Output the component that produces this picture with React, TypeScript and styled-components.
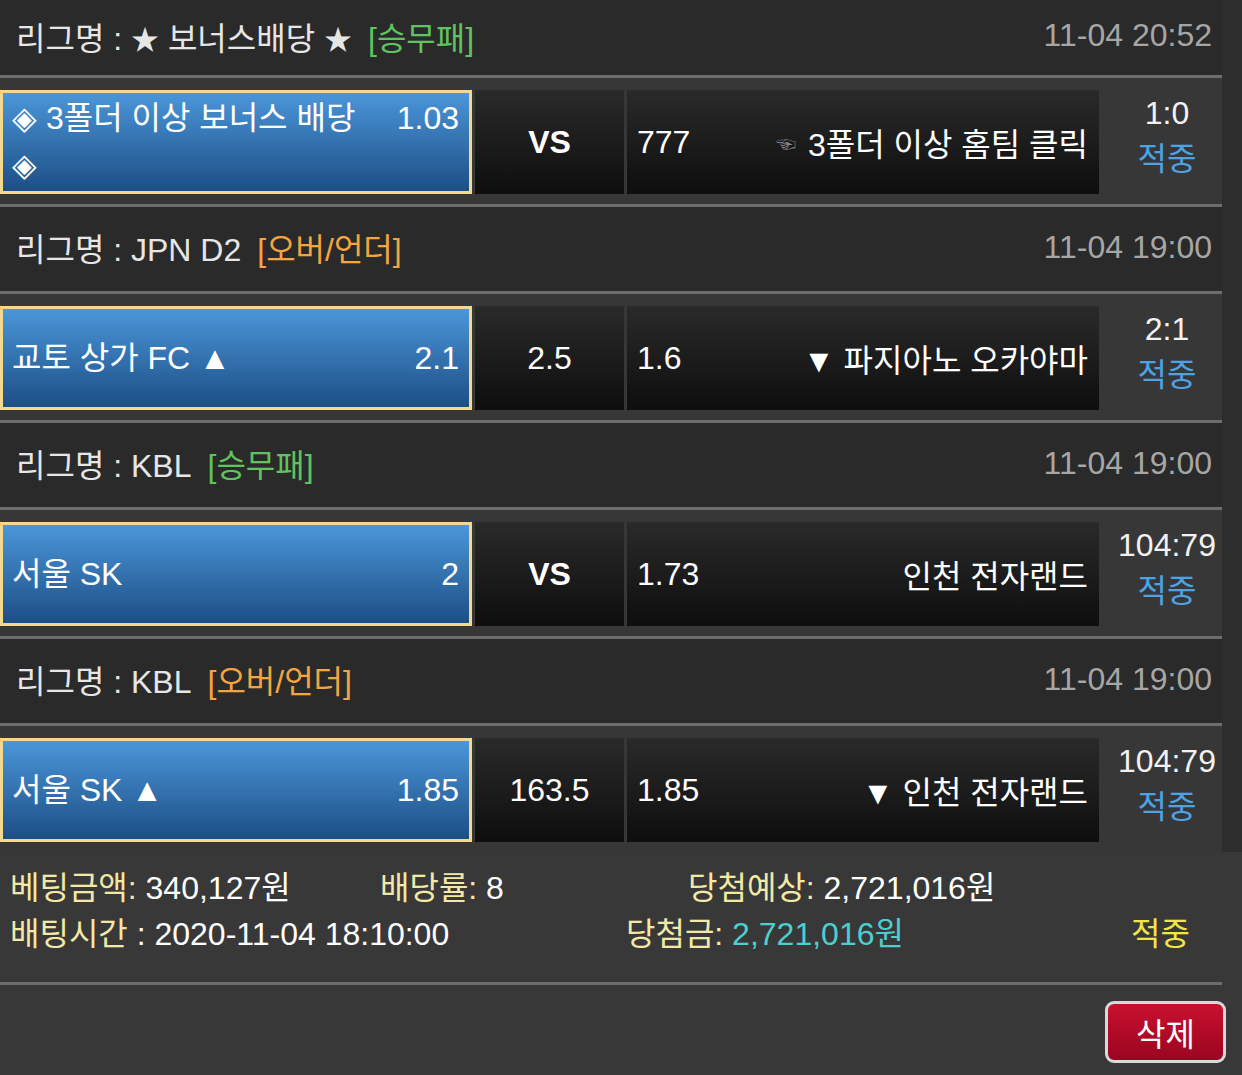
import styled, { createGlobalStyle } from "styled-components";

type TagTone = "green" | "orange";

interface Match {
  league: string;
  tag: string;
  tone: TagTone;
  date: string;
  home: string;
  homeOdds: string;
  middle: string;
  middleBold?: boolean;
  awayOdds: string;
  away: string;
  awayHint?: boolean;
  score: string;
  result: string;
}

const matches: Match[] = [
  {
    league: "★ 보너스배당 ★",
    tag: "[승무패]",
    tone: "green",
    date: "11-04 20:52",
    home: "◈ 3폴더 이상 보너스 배당 ◈",
    homeOdds: "1.03",
    middle: "VS",
    middleBold: true,
    awayOdds: "777",
    away: "3폴더 이상 홈팀 클릭",
    awayHint: true,
    score: "1:0",
    result: "적중",
  },
  {
    league: "JPN D2",
    tag: "[오버/언더]",
    tone: "orange",
    date: "11-04 19:00",
    home: "교토 상가 FC ▲",
    homeOdds: "2.1",
    middle: "2.5",
    awayOdds: "1.6",
    away: "▼ 파지아노 오카야마",
    score: "2:1",
    result: "적중",
  },
  {
    league: "KBL",
    tag: "[승무패]",
    tone: "green",
    date: "11-04 19:00",
    home: "서울 SK",
    homeOdds: "2",
    middle: "VS",
    middleBold: true,
    awayOdds: "1.73",
    away: "인천 전자랜드",
    score: "104:79",
    result: "적중",
  },
  {
    league: "KBL",
    tag: "[오버/언더]",
    tone: "orange",
    date: "11-04 19:00",
    home: "서울 SK ▲",
    homeOdds: "1.85",
    middle: "163.5",
    awayOdds: "1.85",
    away: "▼ 인천 전자랜드",
    score: "104:79",
    result: "적중",
  },
];

const tagColours: Record<TagTone, string> = {
  green: "#5fc35f",
  orange: "#f5a540",
};

const GlobalStyle = createGlobalStyle`
  html, body {
    margin: 0;
    background: #383838;
  }
  body {
    font-family: "Liberation Sans", "Noto Sans CJK KR", sans-serif;
    color: #fff;
  }
`;

const ListArea = styled.div`
  background: #2d2d2d;
`;

const List = styled.div`
  width: 1222px;
`;

const LeagueHeader = styled.div<{ $compact?: boolean }>`
  box-sizing: border-box;
  height: ${({ $compact }) => ($compact ? 75 : 84)}px;
  display: flex;
  align-items: center;
  justify-content: space-between;
  padding: 0 10px 4px 16px;
  background: #2a2a2a;
  font-size: 32px;
  color: #e6e6e6;
  white-space: nowrap;
`;

const Star = styled.span`
  font-size: 28px;
`;

const Tag = styled.span<{ $tone: TagTone }>`
  margin-left: 16px;
  color: ${({ $tone }) => tagColours[$tone]};
`;

const DateText = styled.span`
  color: #a6a6a6;
`;

const Divider = styled.div`
  width: 1222px;
  height: 3px;
  background: #6d6d6d;
`;

const MatchRow = styled.div`
  display: flex;
  gap: 3px;
  height: 104px;
  padding: 12px 0 10px;
  background: #373737;
  font-size: 32px;
`;

const HomeCell = styled.div`
  box-sizing: border-box;
  width: 472px;
  height: 104px;
  display: flex;
  align-items: center;
  padding: 0 10px 0 9px;
  border: 3px solid #f2d98e;
  background: linear-gradient(#4b96d9, #1c4e85);
`;

const HomeText = styled.div`
  width: 100%;
  line-height: 47px;
`;

const HomeOdds = styled.span`
  float: right;
  margin-left: 30px;
`;

const DarkCell = styled.div`
  box-sizing: border-box;
  height: 104px;
  display: flex;
  align-items: center;
  background: linear-gradient(#2a2a2a, #0e0e0e);
`;

const MiddleCell = styled(DarkCell)<{ $bold?: boolean }>`
  width: 149px;
  justify-content: center;
  font-weight: ${({ $bold }) => ($bold ? 700 : 400)};
`;

const AwayCell = styled(DarkCell)`
  width: 472px;
  justify-content: space-between;
  padding: 0 11px 0 10px;
  white-space: nowrap;
`;

const Hint = styled.span`
  font-size: 20px;
  color: #8a8a8a;
  margin-right: 12px;
  vertical-align: 4px;
`;

const ScoreCell = styled.div`
  box-sizing: border-box;
  flex: 1;
  height: 104px;
  display: flex;
  flex-direction: column;
  align-items: center;
  justify-content: center;
  padding: 0 0 12px 10px;
  line-height: 46px;
  color: #f2f2f2;
`;

const Result = styled.span`
  color: #4ea2e2;
`;

const Summary = styled.div`
  padding: 13px 0 25px 10px;
  font-size: 32px;
  line-height: 46px;
  white-space: nowrap;
`;

const SummaryRow = styled.div<{ $cols: string }>`
  display: grid;
  grid-template-columns: ${({ $cols }) => $cols};
`;

const Label = styled.span`
  color: #f3e8a6;
`;

const Value = styled.span<{ $tone?: "cyan" }>`
  color: ${({ $tone }) => ($tone === "cyan" ? "#4dcfcf" : "#fff")};
`;

const HitText = styled.span`
  color: #f2e54a;
`;

const ButtonBar = styled.div`
  display: flex;
  justify-content: flex-end;
  padding: 16px 16px 10px;
`;

const DeleteButton = styled.button`
  box-sizing: border-box;
  width: 121px;
  height: 62px;
  border: 3px solid #d9d9d9;
  border-radius: 9px;
  background: linear-gradient(#c9112f, #9a0520);
  color: #fff;
  font-family: inherit;
  font-size: 32px;
  padding: 0;
`;

// the league title keeps its stars a touch smaller than the text
const LeagueTitle = ({ name }: { name: string }) => (
  <>
    {name
      .split(/(★)/)
      .map((part, i) => (part === "★" ? <Star key={i}>★</Star> : part))}
  </>
);

const App = () => {
  return (
    <>
      <GlobalStyle />
      <ListArea>
        <List>
          {matches.map((m, idx) => (
            <div key={idx}>
              <LeagueHeader $compact={idx === 0}>
                <span>
                  <LeagueTitle name={`리그명 : ${m.league}`} />
                  <Tag $tone={m.tone}>{m.tag}</Tag>
                </span>
                <DateText>{m.date}</DateText>
              </LeagueHeader>
              <Divider />
              <MatchRow>
                <HomeCell>
                  <HomeText>
                    <HomeOdds>{m.homeOdds}</HomeOdds>
                    {m.home}
                  </HomeText>
                </HomeCell>
                <MiddleCell $bold={m.middleBold}>{m.middle}</MiddleCell>
                <AwayCell>
                  <span>{m.awayOdds}</span>
                  <span>
                    {m.awayHint && <Hint>☜</Hint>}
                    {m.away}
                  </span>
                </AwayCell>
                <ScoreCell>
                  <span>{m.score}</span>
                  <Result>{m.result}</Result>
                </ScoreCell>
              </MatchRow>
              {idx < matches.length - 1 && <Divider />}
            </div>
          ))}
        </List>
      </ListArea>
      <Summary>
        <SummaryRow $cols="370px 308px 1fr">
          <span>
            <Label>베팅금액:</Label> <Value>340,127원</Value>
          </span>
          <span>
            <Label>배당률:</Label> <Value>8</Value>
          </span>
          <span>
            <Label>당첨예상:</Label> <Value>2,721,016원</Value>
          </span>
        </SummaryRow>
        <SummaryRow $cols="616px 505px 1fr">
          <span>
            <Label>배팅시간</Label> <Value>: 2020-11-04 18:10:00</Value>
          </span>
          <span>
            <Label>당첨금:</Label> <Value $tone="cyan">2,721,016원</Value>
          </span>
          <HitText>적중</HitText>
        </SummaryRow>
      </Summary>
      <Divider />
      <ButtonBar>
        <DeleteButton>삭제</DeleteButton>
      </ButtonBar>
    </>
  );
};

export default App;
